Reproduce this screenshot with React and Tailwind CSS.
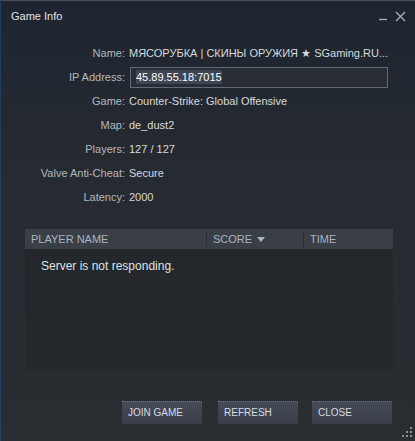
const rows = [
  { label: 'Name', value: 'МЯСОРУБКА | СКИНЫ ОРУЖИЯ ★ SGaming.RU...' },
  { label: 'IP Address', value: '45.89.55.18:7015', input: true },
  { label: 'Game', value: 'Counter-Strike: Global Offensive' },
  { label: 'Map', value: 'de_dust2' },
  { label: 'Players', value: '127 / 127' },
  { label: 'Valve Anti-Cheat', value: 'Secure' },
  { label: 'Latency', value: '2000' },
]

function DialogButton({ children, primary }) {
  return (
    <button
      className={
        'w-20 h-[23px] pl-[6px] text-left text-[10px] leading-none text-[#d5dde5] bg-gradient-to-b from-[#454b57] to-[#393e49] border-t border-dotted ' +
        (primary ? 'border-[#9a6a45]' : 'border-[#6a7382]')
      }
    >
      {children}
    </button>
  )
}

export default function App() {
  return (
    <div
      className="w-[415px] h-[441px] flex flex-col border-t border-l border-t-[#4b5058] border-l-[#21405e] bg-gradient-to-b from-[#1e2530] via-[#272b31] via-45% to-[#2a2d32] text-[11px]"
      style={{ fontFamily: '"Liberation Sans", Arial, sans-serif' }}
    >
      {/* Title bar */}
      <div className="h-[30px] flex items-center pl-[10px] pr-[9px]">
        <span className="text-[11px] text-[#dfe3e6]">Game Info</span>
        <div className="ml-auto flex items-center gap-[7px] text-[#a3a8ad]">
          <svg width="9" height="10" viewBox="0 0 9 10">
            <line x1="0" y1="8.5" x2="8" y2="8.5" stroke="currentColor" strokeWidth="1.4" />
          </svg>
          <svg width="11" height="11" viewBox="0 0 11 11">
            <line x1="1" y1="1" x2="10" y2="10" stroke="currentColor" strokeWidth="1.4" />
            <line x1="10" y1="1" x2="1" y2="10" stroke="currentColor" strokeWidth="1.4" />
          </svg>
        </div>
      </div>

      {/* Info rows */}
      <div className="mt-[10px] flex flex-col">
        {rows.map(r => (
          <div key={r.label} className="h-6 flex items-center">
            <div className="w-[124px] text-right text-[#b3b8bd]">{r.label}:</div>
            {r.input ? (
              <div className="ml-[5px] w-[258px] h-[21px] flex items-center pl-[5px] border border-[#5d6b7a] bg-[#2a2e34]">
                <span className="bg-[#3c4655] text-white leading-[14px]">{r.value}</span>
              </div>
            ) : (
              <div className="ml-[4px] text-[#d6dadd] whitespace-nowrap">{r.value}</div>
            )}
          </div>
        ))}
      </div>

      {/* Player list */}
      <div className="mt-5 mx-6 w-[368px] flex flex-col">
        <div className="h-5 flex items-center bg-[#3a3e45] text-[11px] text-[#a8b6c3]">
          <div className="w-[182px] pl-[6px] border-r border-[#2a2d32]">PLAYER NAME</div>
          <div className="w-[97px] pl-[6px] border-r border-[#2a2d32] flex items-center gap-[5px]">
            SCORE
            <svg width="8" height="5" viewBox="0 0 8 5">
              <path d="M0 0 L8 0 L4 5 Z" fill="#a8b6c3" />
            </svg>
          </div>
          <div className="pl-[6px]">TIME</div>
        </div>
        <div className="h-[120px] bg-[#24272c] pt-[9px] pl-4 text-[12px] leading-4 text-[#dfe3e6]">
          Server is not responding.
        </div>
      </div>

      {/* Buttons */}
      <div className="mt-8 flex pl-[121px]">
        <DialogButton primary>JOIN GAME</DialogButton>
        <div className="ml-4">
          <DialogButton>REFRESH</DialogButton>
        </div>
        <div className="ml-[14px]">
          <DialogButton>CLOSE</DialogButton>
        </div>
      </div>

      {/* Resize grip */}
      <div className="mt-auto mb-[4px] self-end mr-[3px]">
        <svg width="10" height="10" viewBox="0 0 10 10">
          <rect x="8" y="0" width="2" height="2" fill="#8a9096" />
          <rect x="4" y="4" width="2" height="2" fill="#8a9096" />
          <rect x="8" y="4" width="2" height="2" fill="#8a9096" />
          <rect x="0" y="8" width="2" height="2" fill="#8a9096" />
          <rect x="4" y="8" width="2" height="2" fill="#8a9096" />
          <rect x="8" y="8" width="2" height="2" fill="#8a9096" />
        </svg>
      </div>
    </div>
  )
}
